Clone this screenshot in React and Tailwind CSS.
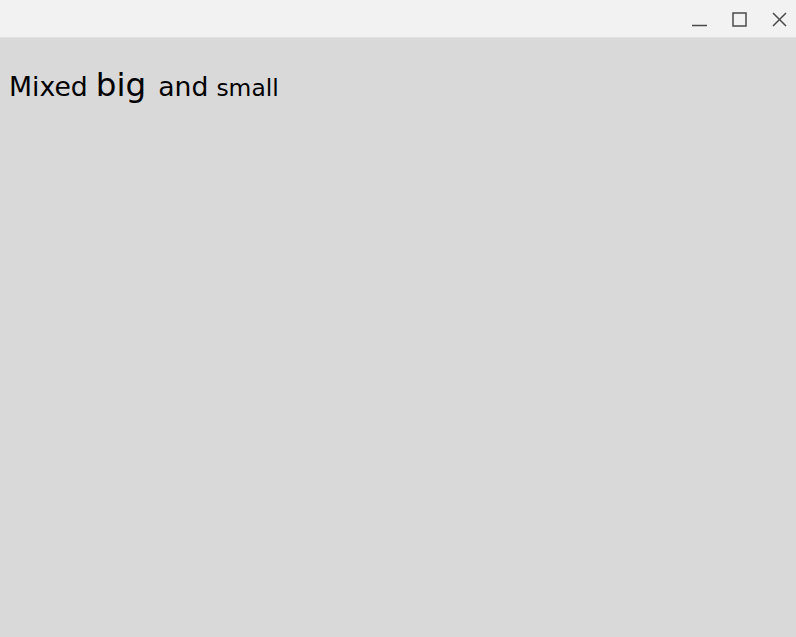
export default function App() {
  return (
    <div className="w-[796px] h-[637px] flex flex-col bg-[#d9d9d9] font-['DejaVu_Sans',sans-serif] overflow-hidden">
      {/* Title bar */}
      <div className="h-[38px] shrink-0 bg-[#f2f2f2] border-b border-[#e2e2e2] flex items-center justify-end pr-[9px] gap-[25px]">
        <svg width="15" height="15" viewBox="0 0 15 15" className="mt-[1px]">
          <path d="M0 13.5H15" stroke="#4a4a4a" strokeWidth="1.5" fill="none" />
        </svg>
        <svg width="15" height="15" viewBox="0 0 15 15" className="mt-[1px]">
          <rect x="1" y="1" width="13" height="13" stroke="#4a4a4a" strokeWidth="1.5" fill="none" />
        </svg>
        <svg width="15" height="15" viewBox="0 0 15 15" className="mt-[1px]">
          <path d="M1 1L14 14M14 1L1 14" stroke="#4a4a4a" strokeWidth="1.5" fill="none" />
        </svg>
      </div>

      {/* Content */}
      <div className="pt-[31px] pl-[9px] flex items-baseline text-black leading-none">
        <span className="text-[26.7px]">Mixed</span>
        <span className="text-[32.6px] ml-[8px]">big</span>
        <span className="text-[26.7px] ml-[12px]">and</span>
        <span className="text-[23.4px] ml-[8px]">small</span>
      </div>
    </div>
  )
}
